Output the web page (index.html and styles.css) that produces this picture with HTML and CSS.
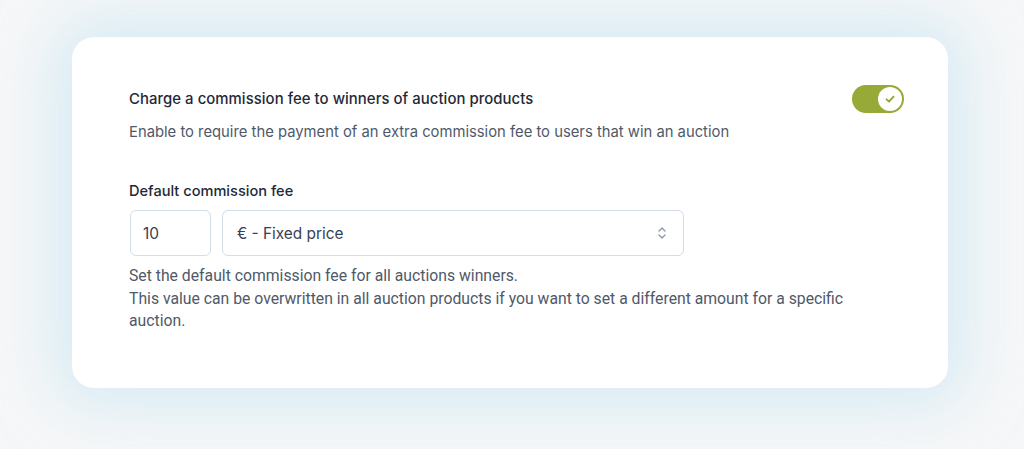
FILE: index.html
```html
<!DOCTYPE html>
<html>
<head>
<meta charset="utf-8">
<link rel="stylesheet" href="styles.css">
</head>
<body>
<div class="page">
  <div class="card">
    <div class="row-head">
      <div class="title">Charge a commission fee to winners of auction products</div>
      <div class="toggle">
        <div class="knob">
          <svg width="12" height="12" viewBox="0 0 12 12"><path d="M2.5 6.3 L5 8.6 L9.6 3.6" fill="none" stroke="#93a432" stroke-width="1.8" stroke-linecap="round" stroke-linejoin="round"/></svg>
        </div>
      </div>
    </div>
    <div class="desc">Enable to require the payment of an extra commission fee to users that win an auction</div>
    <div class="label">Default commission fee</div>
    <div class="fields">
      <div class="input">10</div>
      <div class="select">
        <span>€ - Fixed price</span>
        <svg width="10" height="16" viewBox="0 0 10 16"><path d="M2 6 L5 3 L8 6 M2 10 L5 13 L8 10" fill="none" stroke="#8a94a3" stroke-width="1.3" stroke-linecap="round" stroke-linejoin="round"/></svg>
      </div>
    </div>
    <div class="help">Set the default commission fee for all auctions winners.<br>This value can be overwritten in all auction products if you want to set a different amount for a specific auction.</div>
  </div>
</div>
</body>
</html>
```
FILE: styles.css
```css
html, body { margin: 0; padding: 0; }
body {
  width: 1024px;
  height: 449px;
  background: #f6f7f8;
  overflow: hidden;
  font-family: Inter, "Noto Sans", sans-serif;
}
.page {
  padding: 37px 76px 0 72px;
}
.card {
  background: #fff;
  border-radius: 22px;
  height: 351px;
  box-sizing: border-box;
  padding: 47px 44px 0 57px;
  box-shadow: 0 0 60px 18px rgba(190, 226, 240, 0.55);
}
.row-head {
  display: flex;
  justify-content: space-between;
  align-items: center;
  height: 28px;
  padding-top: 1px;
}
.title {
  font-size: 14.9px;
  font-weight: 500;
  color: #1f2937;
  letter-spacing: 0.05px;
}
.toggle {
  width: 52px;
  height: 28px;
  border-radius: 14px;
  background: #97a936;
  display: flex;
  align-items: center;
  justify-content: flex-end;
  padding-right: 2px;
  box-sizing: border-box;
}
.knob {
  width: 24px;
  height: 24px;
  border-radius: 50%;
  background: #fff;
  display: flex;
  align-items: center;
  justify-content: center;
}
.desc {
  margin-top: 9px;
  font-size: 14.8px;
  color: #4f5968;
  line-height: 20px;
}
.label {
  margin-top: 39px;
  font-size: 14.6px;
  font-weight: 500;
  color: #1f2937;
  line-height: 20px;
}
.fields {
  display: flex;
  gap: 11px;
  margin-top: 9px;
  margin-left: 1px;
}
.input, .select {
  height: 46px;
  box-sizing: border-box;
  border: 1px solid #d3dde7;
  border-radius: 6px;
  display: flex;
  align-items: center;
  font-size: 15.4px;
  color: #374151;
}
.input {
  width: 81px;
  padding-left: 12px;
}
.select {
  width: 462px;
  padding: 0 16px 0 14px;
  justify-content: space-between;
}
.help {
  margin-top: 9px;
  font-family: Roboto, "Liberation Sans", sans-serif;
  font-size: 15.75px;
  line-height: 22.5px;
  color: #4f5968;
  width: 730px;
}
```
